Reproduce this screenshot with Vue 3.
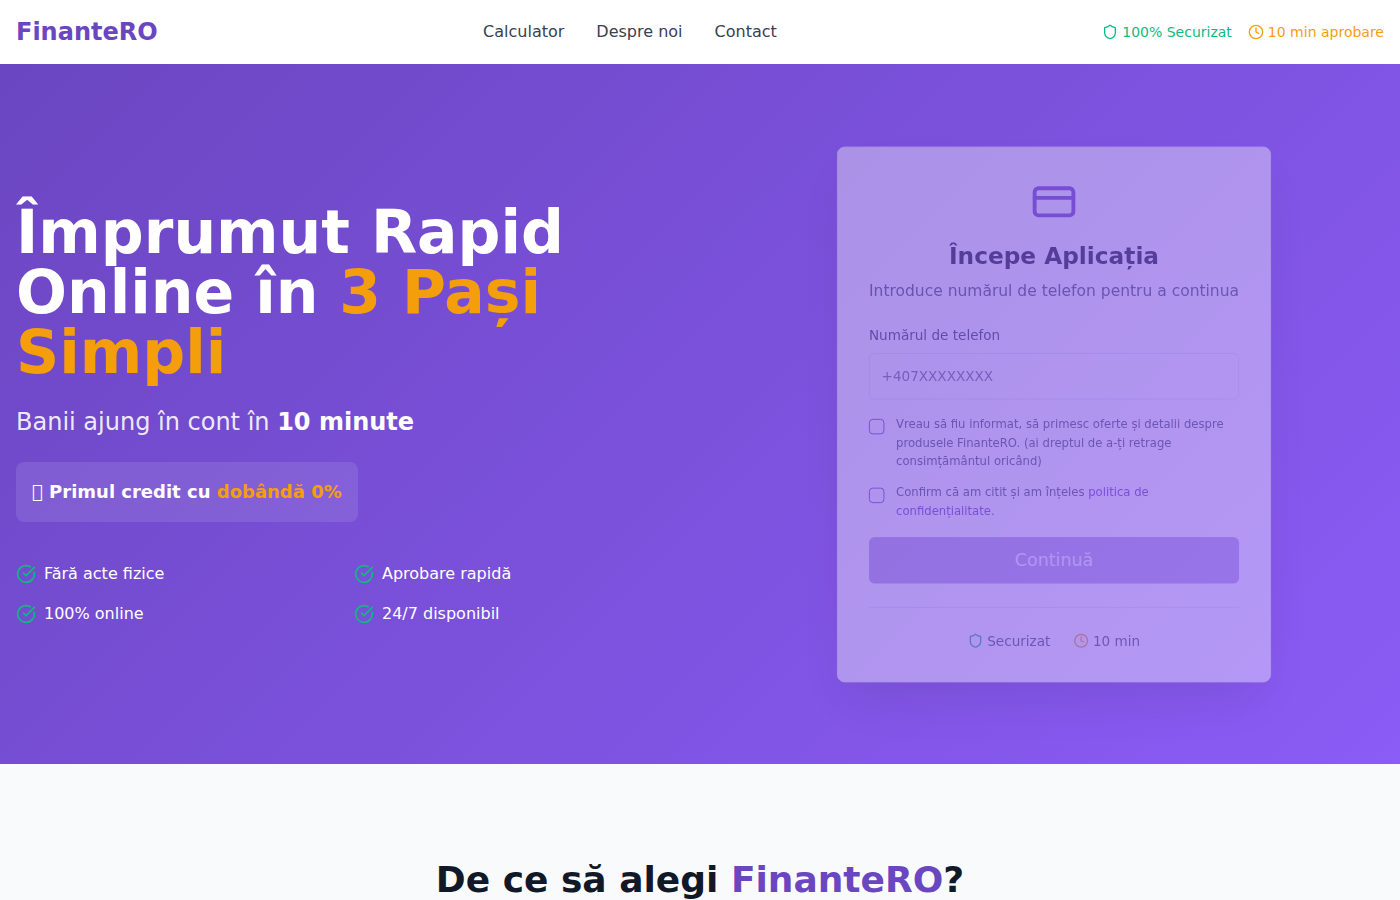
<template>
  <div class="page">
    <header class="topbar">
      <div class="logo">FinanteRO</div>
      <nav class="nav">
        <a v-for="link in links" :key="link">{{ link }}</a>
      </nav>
      <div class="trust">
        <span class="trust-item green">
          <svg class="ico16" viewBox="0 0 24 24"><path d="M20 13c0 5-3.5 7.5-7.66 8.95a1 1 0 0 1-.67-.01C7.5 20.5 4 18 4 13V6a1 1 0 0 1 1-1c2 0 4.5-1.2 6.24-2.72a1.17 1.17 0 0 1 1.52 0C14.51 3.81 17 5 19 5a1 1 0 0 1 1 1z" /></svg>
          100% Securizat
        </span>
        <span class="trust-item amber">
          <svg class="ico16" viewBox="0 0 24 24"><circle cx="12" cy="12" r="10" /><polyline points="12 6 12 12 16 14" /></svg>
          10 min aprobare
        </span>
      </div>
    </header>

    <section class="hero">
      <div class="hero-left">
        <h1>Împrumut Rapid Online în <span class="hl">3 Pași Simpli</span></h1>
        <p class="lead">Banii ajung în cont în <strong>10 minute</strong></p>
        <div class="promo">&#xE000; Primul credit cu <span class="hl">dobândă 0%</span></div>
        <ul class="features">
          <li v-for="f in features" :key="f">
            <svg class="ico20" viewBox="0 0 24 24"><path d="M21.801 10A10 10 0 1 1 17 3.335" /><path d="m9 11 3 3L22 4" /></svg>
            {{ f }}
          </li>
        </ul>
      </div>

      <div class="hero-right">
        <form class="card" @submit.prevent>
          <div class="card-head">
            <svg class="card-ico" viewBox="0 0 24 24"><rect width="20" height="14" x="2" y="5" rx="2" /><line x1="2" x2="22" y1="10" y2="10" /></svg>
            <h2>Începe Aplicația</h2>
            <p>Introduce numărul de telefon pentru a continua</p>
          </div>
          <label class="field-label" for="phone">Numărul de telefon</label>
          <input id="phone" class="phone" type="tel" placeholder="+407XXXXXXXX" />
          <label class="check">
            <input type="checkbox" />
            <span>Vreau să fiu informat, să primesc oferte și detalii despre produsele FinanteRO. (ai dreptul de a-ți retrage consimțământul oricând)</span>
          </label>
          <label class="check">
            <input type="checkbox" />
            <span>Confirm că am citit și am înțeles <a class="policy">politica de confidențialitate</a>.</span>
          </label>
          <button class="submit" type="submit" disabled>Continuă</button>
          <div class="card-foot">
            <span class="foot-item">
              <svg class="ico16 green" viewBox="0 0 24 24"><path d="M20 13c0 5-3.5 7.5-7.66 8.95a1 1 0 0 1-.67-.01C7.5 20.5 4 18 4 13V6a1 1 0 0 1 1-1c2 0 4.5-1.2 6.24-2.72a1.17 1.17 0 0 1 1.52 0C14.51 3.81 17 5 19 5a1 1 0 0 1 1 1z" /></svg>
              Securizat
            </span>
            <span class="foot-item">
              <svg class="ico16 amber" viewBox="0 0 24 24"><circle cx="12" cy="12" r="10" /><polyline points="12 6 12 12 16 14" /></svg>
              10 min
            </span>
          </div>
        </form>
      </div>
    </section>

    <section class="why">
      <h2>De ce să alegi <span>FinanteRO</span>?</h2>
    </section>
  </div>
</template>

<script setup>
const links = ['Calculator', 'Despre noi', 'Contact']
const features = ['Fără acte fizice', 'Aprobare rapidă', '100% online', '24/7 disponibil']
</script>

<style>
html, body {
  margin: 0;
  background: #fff;
}
</style>

<style scoped>
.page {
  font-family: "DejaVu Sans", sans-serif;
  color: #111827;
}

svg {
  fill: none;
  stroke: currentColor;
  stroke-width: 2;
  stroke-linecap: round;
  stroke-linejoin: round;
  flex-shrink: 0;
}

.ico16 { width: 16px; height: 16px; }
.ico20 { width: 20px; height: 20px; }
.green { color: #10b981; }
.amber { color: #f59e0b; }

.topbar {
  height: 64px;
  box-sizing: border-box;
  padding: 0 16px;
  display: flex;
  align-items: center;
  justify-content: space-between;
  background: #fff;
}

.logo {
  font-size: 24px;
  font-weight: 700;
  color: #6b46c1;
}

.nav {
  display: flex;
  gap: 32px;
  font-size: 16px;
  line-height: 24px;
  color: #374151;
}

.trust {
  display: flex;
  gap: 16px;
  font-size: 14px;
}

.trust-item {
  display: flex;
  align-items: center;
  gap: 4px;
}

.hero {
  height: 700px;
  box-sizing: border-box;
  padding: 0 16px;
  display: grid;
  grid-template-columns: 1fr 1fr;
  gap: 48px;
  align-items: center;
  background: linear-gradient(135deg, #6b46c1 0%, #8b5cf6 100%);
  color: #fff;
}

h1 {
  margin: 0 0 24px;
  font-size: 60px;
  line-height: 60px;
  font-weight: 700;
}

.hl { color: #f59e0b; }

.lead {
  margin: 0 0 24px;
  font-size: 24px;
  line-height: 32px;
  color: rgba(255, 255, 255, 0.9);
}

.lead strong { color: #fff; }

.promo {
  display: inline-block;
  margin-bottom: 40px;
  padding: 16px;
  border-radius: 8px;
  background: rgba(255, 255, 255, 0.1);
  font-size: 18px;
  line-height: 28px;
  font-weight: 700;
}

.features {
  margin: 0;
  padding: 0;
  list-style: none;
  display: grid;
  grid-template-columns: 1fr 1fr;
  gap: 16px;
  font-size: 16px;
  line-height: 24px;
}

.features li {
  display: flex;
  align-items: center;
  gap: 8px;
}

.features svg { color: #10b981; }

.hero-right {
  display: flex;
  justify-content: center;
}

/* caught mid fade-in in the reference, hence the opacity and scale */
.card {
  width: 448px;
  box-sizing: border-box;
  padding: 32px;
  border: 1px solid #f3f4f6;
  border-radius: 8px;
  background: #fff;
  box-shadow: 0 25px 50px -12px rgba(0, 0, 0, 0.25);
  color: #111827;
  opacity: 0.38;
  transform: scale(0.969);
}

.card-head {
  text-align: center;
  margin-bottom: 24px;
}

.card-ico {
  display: block;
  width: 48px;
  height: 48px;
  margin: 0 auto 16px;
  color: #6b46c1;
}

.card-head h2 {
  margin: 0 0 8px;
  font-size: 24px;
  line-height: 32px;
  font-weight: 700;
}

.card-head p {
  margin: 0;
  font-size: 16px;
  line-height: 24px;
  color: #4b5563;
}

.field-label {
  display: block;
  margin-bottom: 8px;
  font-size: 14px;
  line-height: 20px;
  color: #374151;
}

.phone {
  display: block;
  width: 100%;
  height: 48px;
  box-sizing: border-box;
  padding: 0 12px;
  margin-bottom: 16px;
  border: 1px solid #e5e7eb;
  border-radius: 6px;
  outline: none;
  font-family: inherit;
  font-size: 14px;
  background: #fff;
}

.phone::placeholder { color: #6b7280; }

.check {
  display: flex;
  align-items: flex-start;
  gap: 12px;
  margin-bottom: 12px;
  font-size: 12px;
  line-height: 19.5px;
  color: #4b5563;
}

.check input {
  appearance: none;
  width: 16px;
  height: 16px;
  margin: 4px 0 0;
  flex-shrink: 0;
  border: 1px solid #6b46c1;
  border-radius: 4px;
  background: #fff;
}

.policy { color: #6b46c1; }

.submit {
  display: block;
  width: 100%;
  height: 48px;
  margin-top: 16px;
  border: 0;
  border-radius: 6px;
  background: #6b46c1;
  color: #fff;
  font-family: inherit;
  font-size: 18px;
  opacity: 0.5;
}

.card-foot {
  margin-top: 24px;
  padding-top: 24px;
  border-top: 1px solid #e5e7eb;
  display: flex;
  justify-content: center;
  gap: 24px;
  font-size: 14px;
  line-height: 20px;
  color: #4b5563;
}

.foot-item {
  display: flex;
  align-items: center;
  gap: 4px;
}

.why {
  padding: 96px 16px;
  background: #f9fafb;
  text-align: center;
}

.why h2 {
  margin: 0;
  font-size: 36px;
  line-height: 40px;
  font-weight: 700;
  color: #111827;
}

.why h2 span { color: #6b46c1; }
</style>
